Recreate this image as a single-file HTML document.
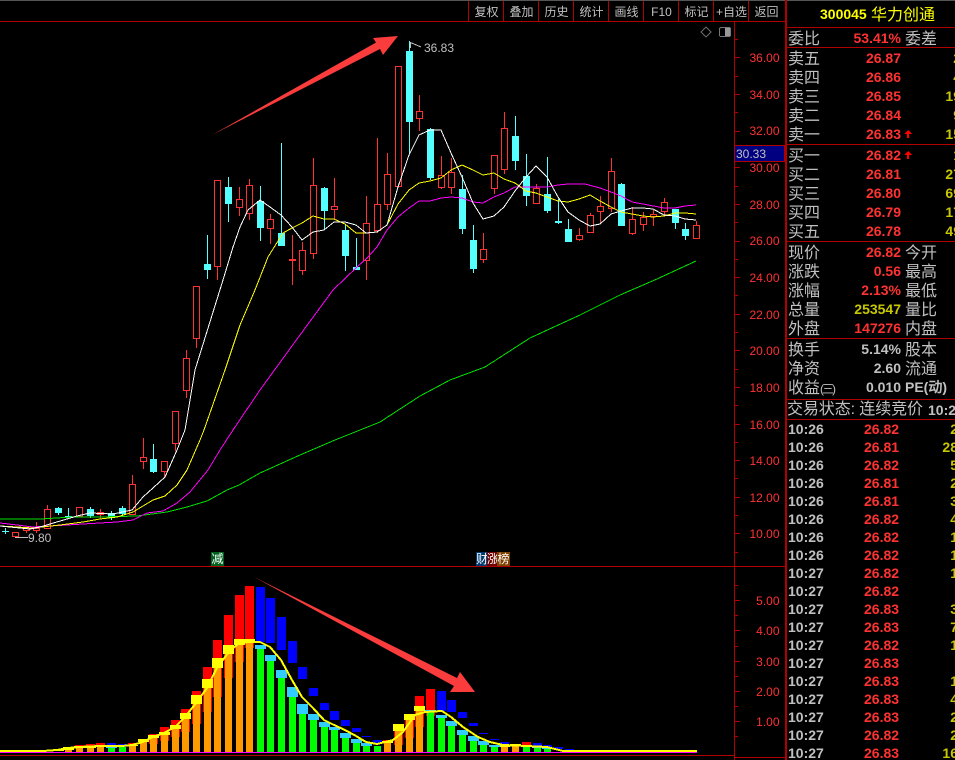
<!DOCTYPE html>
<html><head><meta charset="utf-8"><style>
html,body{margin:0;padding:0;background:#000;width:955px;height:760px;overflow:hidden}
#w{position:relative;width:955px;height:760px;overflow:hidden;background:#000;font-family:"Liberation Sans","WenQuanYi Zen Hei",sans-serif}
svg{position:absolute;left:0;top:0}
.t{position:absolute;white-space:nowrap;line-height:18px;height:18px}
.l{left:788px;font-size:16px;color:#c0c0c0;margin-top:2px}
.m{left:905px;font-size:16px;color:#c0c0c0;margin-top:2px}
.n{right:54px;font-size:14px;font-weight:bold;color:#ff3232}
.y{color:#c8c800}.g{color:#c0c0c0}
.v{right:-6px;font-size:14px;font-weight:bold;color:#c8c800}
.a{left:788px;font-size:14px;font-weight:bold;color:#c0c0c0}
.p{left:864px;font-size:14px;font-weight:bold;color:#ff3232}
.q{right:-3px;font-size:14px;font-weight:bold;color:#c8c800}
.b{top:3px;font-size:12px;color:#c0c0c0;width:35px;text-align:center}
.k{top:552px;height:14px;line-height:14px;font-size:12px;color:#fff;text-align:center}
</style></head><body><div id="w">
<svg width="955" height="760" viewBox="0 0 955 760" shape-rendering="crispEdges">
<rect x="0" y="0" width="955" height="1" fill="#555"/>
<!-- red candles -->
<g fill="none" stroke="#ff3232" stroke-width="1">
<path d="M12.5 532.5h6v4h-6zM23.5 528.5h6v2h-6zM26.5 531V533M33.5 528.5h6v2h-6zM36.5 522V528M36.5 531V533M44.5 509.5h6v19h-6zM47.5 505V509M76.5 507.5h6v9h-6zM97.5 512.5h6v2h-6zM100.5 509V512M100.5 515V519M129.5 484.5h6v30h-6zM132.5 475V484M140.5 457.5h6v4h-6zM143.5 438V457M143.5 462V469M161.5 461.5h6v10h-6zM164.5 472V477M172.5 411.5h6v32h-6zM175.5 444V451M183.5 358.5h6v32h-6zM186.5 350V358M186.5 391V398M193.5 286.5h6v52h-6zM196.5 339V348M214.5 180.5h6v86h-6zM217.5 267V280M236.5 199.5h6v8h-6zM239.5 187V199M239.5 208V216M246.5 185.5h6v28h-6zM249.5 179V185M249.5 214V220M267.5 219.5h6v9h-6zM270.5 214V219M270.5 229V244M292.5 235V285M299.5 250.5h6v20h-6zM302.5 242V250M302.5 271V275M310.5 185.5h6v68h-6zM313.5 158V185M313.5 254V259M331.5 206.5h6v3h-6zM334.5 178V206M334.5 210V220M363.5 223.5h6v37h-6zM366.5 196V223M366.5 261V280M374.5 204.5h6v26h-6zM377.5 138V204M377.5 231V233M384.5 174.5h6v30h-6zM387.5 153V174M387.5 205V210M395.5 66.5h6v120h-6zM416.5 111.5h6v7h-6zM419.5 95V111M419.5 119V131M438.5 175.5h6v12h-6zM441.5 156V175M441.5 188V189M448.5 172.5h6v15h-6zM451.5 158V172M451.5 188V194M480.5 249.5h6v10h-6zM483.5 233V249M483.5 260V263M491.5 155.5h6v33h-6zM494.5 189V194M501.5 128.5h6v41h-6zM504.5 112V128M504.5 170V174M533.5 188.5h6v15h-6zM536.5 184V188M576.5 235.5h6v4h-6zM579.5 228V235M579.5 240V241M587.5 215.5h6v17h-6zM590.5 213V215M597.5 206.5h6v5h-6zM600.5 196V206M600.5 212V224M608.5 171.5h6v37h-6zM611.5 158V171M611.5 209V212M629.5 219.5h6v14h-6zM632.5 207V219M632.5 234V235M640.5 217.5h6v7h-6zM643.5 212V217M643.5 225V231M650.5 214.5h6v2h-6zM653.5 210V214M653.5 217V226M661.5 202.5h6v9h-6zM664.5 198V202M664.5 212V215M693.5 225.5h6v13h-6zM696.5 221V225"/>
</g>
<rect x="289" y="259" width="7" height="2" fill="#ff3232"/>
<!-- cyan candles -->
<path fill="none" stroke="#54ffff" d="M2 531.5h7M5.5 528V534M58.5 507V515M65 516.5h7M68.5 508V518M90.5 507V518M111.5 511V520M122.5 506V517M153.5 444V473M207.5 235V279M228.5 177V222M260.5 186V241M281.5 143V246M324.5 187V230M345.5 225V271M356.5 238V270M409.5 41V154M430.5 128V180M462.5 175V234M473.5 225V273M515.5 116V170M526.5 154V206M547.5 157V213M558.5 199V224M568.5 219V242M621.5 183V226M675.5 209V229M685.5 223V240"/>
<path fill="#54ffff" d="M55 508h7v5h-7zM87 509h7v7h-7zM108 513h7v5h-7zM119 508h7v6h-7zM150 459h7v13h-7zM204 264h7v6h-7zM225 187h7v17h-7zM257 201h7v27h-7zM278 233h7v13h-7zM321 188h7v23h-7zM342 230h7v26h-7zM353 267h7v3h-7zM406 51h7v71h-7zM427 129h7v49h-7zM459 189h7v40h-7zM470 240h7v29h-7zM512 136h7v25h-7zM523 176h7v20h-7zM544 194h7v17h-7zM555 221h7v2h-7zM565 229h7v13h-7zM618 184h7v42h-7zM672 209h7v14h-7zM682 229h7v7h-7z"/>
<!-- moving averages -->
<g fill="none" stroke-width="1">
<polyline stroke="#00e000" points="0,519 40,519 73,517 100,517 137,516 167,512 187,507 207,501 227,490 239,485 260,473 300,455 335,440 380,422 420,396 450,380 485,367 530,338 580,315 620,295 657,279 696,261"/>
<polyline stroke="#ff00ff" points="0,523 17,525 33,527 67,525 83,524 100,523 117,522 133,520 147,513 163,511 177,503 190,492 208,470 220,450 233,430 260,390 300,335 333,290 357,267 367,258 377,247 387,230 398,217 409,208 419,201 430,201 441,198 451,197 462,198 473,202 483,203 494,197 504,193 515,187 526,187 547,187 558,185 568,184 585,184 600,188 611,192 621,196 632,202 643,204 664,208 675,208 685,206 696,205"/>
<polyline stroke="#ffff00" points="0,526 17,527 33,528 60,525 83,522 100,519 117,517 133,512 153,500 165,496 177,485 187,470 200,440 204,430 225,370 240,325 255,290 268,257 283,233 292,228 302,223 313,216 324,219 334,219 345,224 356,233 366,233 377,232 387,225 398,204 409,190 419,183 430,181 441,178 451,170 462,165 473,170 483,175 494,173 504,179 515,183 526,191 536,193 547,197 558,201 568,202 579,199 590,195 600,201 611,207 621,212 632,214 643,216 653,217 664,216 675,213 685,213 696,214"/>
<polyline stroke="#ffffff" points="0,526 30,529 40,527 77,516 90,513 113,514 132,510 143,497 153,488 165,477 177,450 185,430 195,370 223,280 233,247 240,227 248,210 260,200 270,207 281,215 292,227 302,240 313,232 324,230 334,222 345,222 356,225 366,233 377,232 387,225 398,187 409,155 419,135 430,130 441,130 451,153 462,177 473,203 483,219 494,216 504,207 515,191 526,177 536,166 547,177 558,197 568,212 579,220 590,226 600,224 611,214 621,211 632,208 643,208 653,209 664,215 675,216 685,219 696,220"/>
</g>
<!-- price flags -->
<path fill="none" stroke="#c0c0c0" d="M410.5 42V48M410.5 42.5L421 47M15 537.5H28"/>
<text x="424" y="52" font-family="Liberation Sans" font-size="12" fill="#c0c0c0">36.83</text>
<text x="28" y="542" font-family="Liberation Sans" font-size="12" fill="#c0c0c0">9.80</text>
<!-- lower panel bars -->
<path fill="#ff0000" d="M75 745h9v3h-9zM86 744h9v3h-9zM96 743h9v3h-9zM128 743h9v3h-9zM149 734h9v10h-9zM160 727h9v14h-9zM171 720h9v17h-9zM181 709h9v23h-9zM192 691h9v33h-9zM203 667h9v45h-9zM213 640h9v57h-9zM224 615h9v63h-9zM235 595h9v67h-9zM245 586h9v62h-9zM383 740h9v3h-9zM394 724h9v21h-9zM405 714h9v24h-9zM415 696h9v31h-9zM426 689h9v27h-9zM522 742h9v5h-9z"/>
<path fill="#0000ff" d="M1 750h9v1h-9zM107 743h9v3h-9zM118 744h9v3h-9zM256 587h9v55h-9zM266 598h9v45h-9zM277 617h9v33h-9zM288 641h9v22h-9zM298 667h9v12h-9zM309 688h9v8h-9zM320 703h9v7h-9zM330 711h9v9h-9zM341 720h9v6h-9zM352 728h9v4h-9zM362 736h9v1h-9zM373 740h9v3h-9zM437 691h9v20h-9zM447 700h9v12h-9zM458 712h9v6h-9zM469 723h9v3h-9zM479 733h9v1h-9zM490 739h9v1h-9zM500 742h9v2h-9zM533 743h9v3h-9zM543 745h9v3h-9zM554 747h9v2h-9zM565 749h9v2h-9zM575 751h9v1h-9z"/>
<path fill="#ff9900" d="M65 750h7v2h-7zM76 748h7v4h-7zM87 748h7v4h-7zM97 747h7v5h-7zM129 746h7v6h-7zM140 742h7v10h-7zM150 738h7v14h-7zM161 735h7v17h-7zM172 729h7v23h-7zM182 719h7v33h-7zM193 704h7v48h-7zM204 688h7v64h-7zM214 668h7v84h-7zM225 654h7v98h-7zM236 645h7v107h-7zM246 642h7v110h-7zM384 743h7v9h-7zM395 731h7v21h-7zM406 720h7v32h-7zM416 711h7v41h-7zM501 747h7v5h-7zM512 746h7v6h-7z"/>
<path fill="#00ff00" d="M108 748h7v4h-7zM119 747h7v5h-7zM257 649h7v103h-7zM267 661h7v91h-7zM278 678h7v74h-7zM289 697h7v55h-7zM299 714h7v38h-7zM310 720h7v32h-7zM321 727h7v25h-7zM331 730h7v22h-7zM342 738h7v14h-7zM353 743h7v9h-7zM363 746h7v6h-7zM374 746h7v6h-7zM427 711h7v41h-7zM438 718h7v34h-7zM448 726h7v26h-7zM459 735h7v17h-7zM470 741h7v11h-7zM480 745h7v7h-7zM491 747h7v5h-7zM523 747h7v5h-7zM534 748h7v4h-7zM544 749h7v3h-7z"/>
<path fill="#ffff00" d="M53 749h11v2h-11zM63 747h11v3h-11zM74 746h11v2h-11zM85 746h11v2h-11zM95 745h11v2h-11zM127 745h11v1h-11zM138 739h11v3h-11zM148 735h11v3h-11zM159 732h11v3h-11zM170 725h11v4h-11zM180 713h11v6h-11zM191 695h11v9h-11zM202 679h11v9h-11zM212 658h11v10h-11zM223 645h11v9h-11zM234 639h11v6h-11zM244 639h11v3h-11zM382 741h11v2h-11zM393 724h11v7h-11zM404 714h11v6h-11zM414 706h11v5h-11zM499 745h11v2h-11zM510 744h11v2h-11z"/>
<path fill="#33ccff" d="M106 746h11v2h-11zM255 645h11v4h-11zM265 655h11v6h-11zM276 670h11v8h-11zM287 687h11v10h-11zM297 704h11v10h-11zM308 714h11v6h-11zM319 722h11v5h-11zM329 727h11v3h-11zM340 733h11v5h-11zM351 739h11v4h-11zM361 743h11v3h-11zM425 710h11v1h-11zM436 715h11v3h-11zM446 721h11v5h-11zM457 730h11v5h-11zM468 736h11v5h-11zM478 741h11v4h-11zM489 745h11v2h-11zM521 746h11v1h-11zM532 747h11v1h-11zM542 748h11v1h-11z"/>
<rect x="0" y="752" width="697" height="1" fill="#ff00ff"/>
<polyline fill="none" stroke="#ffff00" stroke-width="2" points="0,751 43,751 57,750 68,748 79,747 100,746 111,746 122,746 132,745 143,742 153,737 164,733 175,727 185,717 196,703 207,688 217,668 228,653 239,643 249,642 260,642 270,647 281,660 292,680 302,697 313,708 324,720 334,725 345,730 356,736 366,742 377,744 393,740 403,732 415,715 425,712 442,711 451,717 463,727 478,737 490,742 503,745 527,746 547,747 563,751 584,751 697,751"/>
<!-- grid lines -->
<g fill="#b00000">
<rect x="0" y="21" width="785" height="1"/>
<rect x="0" y="566" width="785" height="1"/>
<rect x="0" y="755" width="734" height="1"/>
<rect x="734" y="22" width="1" height="738"/>
<rect x="735" y="757" width="50" height="1"/>
<rect x="785" y="0" width="2" height="760"/>
<rect x="787" y="27" width="168" height="1"/>
<rect x="787" y="47" width="168" height="1"/>
<rect x="787" y="144" width="168" height="1"/>
<rect x="787" y="241" width="168" height="1"/>
<rect x="787" y="338" width="168" height="1"/>
<rect x="787" y="399" width="168" height="1"/>
<rect x="787" y="419" width="168" height="1"/>
<rect x="503" y="1" width="1" height="20"/><rect x="538" y="1" width="1" height="20"/><rect x="573" y="1" width="1" height="20"/><rect x="608" y="1" width="1" height="20"/><rect x="643" y="1" width="1" height="20"/><rect x="678" y="1" width="1" height="20"/><rect x="713" y="1" width="1" height="20"/><rect x="748" y="1" width="1" height="20"/><rect x="468" y="1" width="1" height="20"/>
</g>
<path fill="none" stroke="#b00000" d="M735 57.5h5M735 94.5h5M735 131.5h5M735 167.5h5M735 204.5h5M735 241.5h5M735 277.5h5M735 314.5h5M735 350.5h5M735 387.5h5M735 424.5h5M735 460.5h5M735 497.5h5M735 533.5h5M735 39.5h3M735 76.5h3M735 112.5h3M735 149.5h3M735 186.5h3M735 222.5h3M735 259.5h3M735 295.5h3M735 332.5h3M735 369.5h3M735 405.5h3M735 442.5h3M735 478.5h3M735 515.5h3M735 552.5h3M735 600.5h5M735 630.5h5M735 661.5h5M735 691.5h5M735 721.5h5M735 615.5h3M735 646.5h3M735 676.5h3M735 706.5h3M735 585.5h3M735 736.5h3"/>
<g font-family="Liberation Sans" font-size="12" fill="#ff3232" text-anchor="end">
<text x="779.5" y="62">36.00</text><text x="779.5" y="99">34.00</text><text x="779.5" y="135">32.00</text><text x="779.5" y="172">30.00</text><text x="779.5" y="209">28.00</text><text x="779.5" y="245">26.00</text><text x="779.5" y="282">24.00</text><text x="779.5" y="319">22.00</text><text x="779.5" y="355">20.00</text><text x="779.5" y="392">18.00</text><text x="779.5" y="429">16.00</text><text x="779.5" y="465">14.00</text><text x="779.5" y="502">12.00</text><text x="779.5" y="538">10.00</text>
<text x="779.5" y="605">5.00</text><text x="779.5" y="635">4.00</text><text x="779.5" y="666">3.00</text><text x="779.5" y="696">2.00</text><text x="779.5" y="726">1.00</text>
</g>
<rect x="734.5" y="145.5" width="50" height="16" fill="#000080" stroke="#b00000"/>
<text x="736" y="158" font-family="Liberation Sans" font-size="12" fill="#c0c0c0">30.33</text>
<!-- top right icons -->
<path fill="none" stroke="#666" d="M706 27L711 32L706 37L701 32Z"/>
<rect x="719.5" y="27.5" width="11" height="9" rx="1.5" fill="#000" stroke="#777"/>
<rect x="725" y="28" width="5" height="8" fill="#999"/>
<!-- arrows -->
<g shape-rendering="geometricPrecision" fill="#fb3c3c">
<polygon points="212,135 376,42.5 373,38 398,36 383,55 380,49"/>
<polygon points="254,577 457,678 460,672 475,692 450,692 454,686"/>
</g>
</svg>

<span class="t b" style="left:469px">复权</span><span class="t b" style="left:504px">叠加</span><span class="t b" style="left:539px">历史</span><span class="t b" style="left:574px">统计</span><span class="t b" style="left:609px">画线</span><span class="t b" style="left:644px">F10</span><span class="t b" style="left:679px">标记</span><span class="t b" style="left:714px">+自选</span><span class="t b" style="left:749px">返回</span>

<span class="t k" style="left:211px;width:13px;background:#006020">减</span>
<span class="t k" style="left:476px;width:11px;background:#003a70">财</span><span class="t k" style="left:487px;width:10px;background:#700000">涨</span><span class="t k" style="left:497px;width:13px;background:#804000">榜</span>

<span class="t" style="left:820px;top:5px;font-size:14px;font-weight:bold;color:#ffff00">300045</span>
<span class="t" style="left:871px;top:7px;font-size:16px;color:#ffff00">华力创通</span>

<span class="t l" style="top:29px">委比</span><span class="t n" style="top:29px">53.41%</span><span class="t m" style="top:29px">委差</span>

<span class="t l" style="top:49px">卖五</span><span class="t n" style="top:49px">26.87</span><span class="t v" style="top:49px">2</span>
<span class="t l" style="top:68px">卖四</span><span class="t n" style="top:68px">26.86</span><span class="t v" style="top:68px">4</span>
<span class="t l" style="top:87px">卖三</span><span class="t n" style="top:87px">26.85</span><span class="t v" style="top:87px">19</span>
<span class="t l" style="top:106px">卖二</span><span class="t n" style="top:106px">26.84</span><span class="t v" style="top:106px">9</span>
<span class="t l" style="top:125px">卖一</span><span class="t n" style="top:125px">26.83</span><span class="t v" style="top:125px">15</span>
<span class="t l" style="top:146px">买一</span><span class="t n" style="top:146px">26.82</span><span class="t v" style="top:146px">1</span>
<span class="t l" style="top:165px">买二</span><span class="t n" style="top:165px">26.81</span><span class="t v" style="top:165px">27</span>
<span class="t l" style="top:184px">买三</span><span class="t n" style="top:184px">26.80</span><span class="t v" style="top:184px">69</span>
<span class="t l" style="top:203px">买四</span><span class="t n" style="top:203px">26.79</span><span class="t v" style="top:203px">17</span>
<span class="t l" style="top:222px">买五</span><span class="t n" style="top:222px">26.78</span><span class="t v" style="top:222px">49</span>

<svg width="955" height="760" viewBox="0 0 955 760" shape-rendering="crispEdges"><path fill="#ff0000" d="M908 130l4 4h-3v4h-2v-4h-3zM908 151l4 4h-3v4h-2v-4h-3z"/></svg>

<span class="t l" style="top:243px">现价</span><span class="t n" style="top:243px">26.82</span><span class="t m" style="top:243px">今开</span>
<span class="t l" style="top:262px">涨跌</span><span class="t n" style="top:262px">0.56</span><span class="t m" style="top:262px">最高</span>
<span class="t l" style="top:281px">涨幅</span><span class="t n" style="top:281px">2.13%</span><span class="t m" style="top:281px">最低</span>
<span class="t l" style="top:300px">总量</span><span class="t n y" style="top:300px">253547</span><span class="t m" style="top:300px">量比</span>
<span class="t l" style="top:319px">外盘</span><span class="t n" style="top:319px">147276</span><span class="t m" style="top:319px">内盘</span>
<span class="t l" style="top:340px">换手</span><span class="t n g" style="top:340px">5.14%</span><span class="t m" style="top:340px">股本</span>
<span class="t l" style="top:359px">净资</span><span class="t n g" style="top:359px">2.60</span><span class="t m" style="top:359px">流通</span>
<span class="t l" style="top:378px">收益<span style="font-size:12px;letter-spacing:-2px">(三)</span></span><span class="t n g" style="top:378px">0.010</span><span class="t m" style="top:376px;font-size:14px;font-weight:bold">PE(动)</span>

<span class="t l" style="top:399px;left:787px;letter-spacing:-.1px">交易状态: 连续竞价</span>
<span class="t" style="left:928px;top:401px;font-size:14px;font-weight:bold;color:#c0c0c0">10:25</span>

<span class="t a" style="top:420px">10:26</span><span class="t p" style="top:420px">26.82</span><span class="t q" style="top:420px">2</span>
<span class="t a" style="top:438px">10:26</span><span class="t p" style="top:438px">26.81</span><span class="t q" style="top:438px">28</span>
<span class="t a" style="top:456px">10:26</span><span class="t p" style="top:456px">26.82</span><span class="t q" style="top:456px">5</span>
<span class="t a" style="top:474px">10:26</span><span class="t p" style="top:474px">26.81</span><span class="t q" style="top:474px">2</span>
<span class="t a" style="top:492px">10:26</span><span class="t p" style="top:492px">26.81</span><span class="t q" style="top:492px">3</span>
<span class="t a" style="top:510px">10:26</span><span class="t p" style="top:510px">26.82</span><span class="t q" style="top:510px">4</span>
<span class="t a" style="top:528px">10:26</span><span class="t p" style="top:528px">26.82</span><span class="t q" style="top:528px">1</span>
<span class="t a" style="top:546px">10:26</span><span class="t p" style="top:546px">26.82</span><span class="t q" style="top:546px">1</span>
<span class="t a" style="top:564px">10:27</span><span class="t p" style="top:564px">26.82</span><span class="t q" style="top:564px">1</span>
<span class="t a" style="top:582px">10:27</span><span class="t p" style="top:582px">26.82</span>
<span class="t a" style="top:600px">10:27</span><span class="t p" style="top:600px">26.83</span><span class="t q" style="top:600px">3</span>
<span class="t a" style="top:618px">10:27</span><span class="t p" style="top:618px">26.83</span><span class="t q" style="top:618px">7</span>
<span class="t a" style="top:636px">10:27</span><span class="t p" style="top:636px">26.82</span><span class="t q" style="top:636px">1</span>
<span class="t a" style="top:654px">10:27</span><span class="t p" style="top:654px">26.83</span>
<span class="t a" style="top:672px">10:27</span><span class="t p" style="top:672px">26.83</span><span class="t q" style="top:672px">1</span>
<span class="t a" style="top:690px">10:27</span><span class="t p" style="top:690px">26.83</span><span class="t q" style="top:690px">4</span>
<span class="t a" style="top:708px">10:27</span><span class="t p" style="top:708px">26.83</span><span class="t q" style="top:708px">2</span>
<span class="t a" style="top:726px">10:27</span><span class="t p" style="top:726px">26.82</span><span class="t q" style="top:726px">2</span>
<span class="t a" style="top:744px">10:27</span><span class="t p" style="top:744px">26.83</span><span class="t q" style="top:744px">16</span>
</div></body></html>
